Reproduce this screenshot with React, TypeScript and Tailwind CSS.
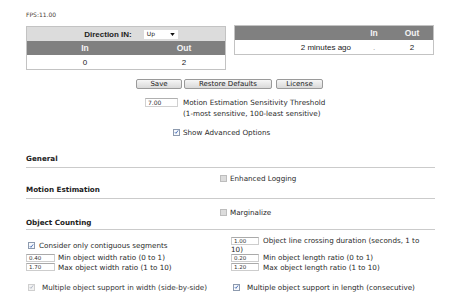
const boxBase = "inline-flex shrink-0 w-[7px] h-[7px] items-center justify-center border";

function Check({ checked, dim }: { checked?: boolean; dim?: boolean }) {
  const tone = dim
    ? "border-[#cfcfcf] bg-[#f2f2f2]"
    : checked
    ? "border-[#8d9aae] bg-[#f7f9fc]"
    : "border-[#bdbdbd] bg-[#dcdcdc]";
  return (
    <span className={`${boxBase} ${tone}`}>
      {checked && (
        <svg viewBox="0 0 8 8" className="w-[6px] h-[6px]">
          <path
            d="M1.4 4.3 L3.1 6.1 L6.7 1.4"
            fill="none"
            stroke={dim ? "#a4adbd" : "#2a58ad"}
            strokeWidth="1.3"
          />
        </svg>
      )}
    </span>
  );
}

function Field({ value, w }: { value: string; w: string }) {
  return (
    <span
      className={`inline-block shrink-0 ${w} h-[8px] border border-[#cdcdcd] border-t-[#aaaaaa] bg-white text-[5.5px] leading-[6px] pl-[2px] text-[#333]`}
    >
      {value}
    </span>
  );
}

function Button({ label, w }: { label: string; w: string }) {
  return (
    <button
      className={`${w} h-[10px] rounded-[2px] border border-[#9a9a9a] bg-gradient-to-b from-[#f6f6f6] to-[#d9d9d9] text-[7px] leading-[8px] text-[#222] font-['DejaVu_Sans',sans-serif]`}
    >
      {label}
    </button>
  );
}

function Section({ title, pb }: { title: string; pb: string }) {
  return (
    <div className={`w-[409px] ${pb} border-b border-[#cbcbcb] text-[7.2px] leading-[9px] font-bold text-[#222]`}>
      {title}
    </div>
  );
}

export default function App() {
  return (
    <div className="w-[464px] h-[307px] overflow-hidden bg-white pl-[26px] text-[7.2px] leading-[9px] text-[#2a2a2a] font-['DejaVu_Sans',sans-serif]">
      {/* FPS */}
      <div className="pt-[11px] h-[19px] text-[6px] leading-[8px] text-[#4a4038]">FPS:11.00</div>

      {/* Counter tables */}
      <div className="mt-[6px] flex items-start gap-[8px] font-['Liberation_Sans',Arial,sans-serif]">
        <div className="mt-[1px] w-[200px] border border-[#c3c3c3]">
          <div className="h-[14px] bg-[#dcdcdc] flex items-center justify-center gap-[12px] pl-[10px]">
            <span className="text-[8px] font-bold text-[#222]">Direction IN:</span>
            <span className="w-[34px] h-[9px] bg-white flex items-center justify-between px-[3px]">
              <span className="text-[6px] leading-[6px] text-[#222] font-['DejaVu_Sans',sans-serif]">Up</span>
              <svg viewBox="0 0 6 4" className="w-[5px] h-[3px]">
                <path d="M0 0 H6 L3 4 Z" fill="#111" />
              </svg>
            </span>
          </div>
          <div className="h-[14px] bg-[#808080] grid grid-cols-[116px_1fr] items-center text-center text-[8.5px] font-bold text-[#f4f4f4]">
            <span>In</span>
            <span>Out</span>
          </div>
          <div className="h-[14px] bg-white grid grid-cols-[116px_1fr] items-center text-center text-[8px] text-[#222]">
            <span>0</span>
            <span>2</span>
          </div>
        </div>

        <div className="w-[200px] border border-[#c3c3c3]">
          <div className="h-[14px] bg-[#808080] grid grid-cols-[122px_34px_1fr] items-center text-center text-[8.5px] font-bold text-[#f4f4f4]">
            <span></span>
            <span>In</span>
            <span>Out</span>
          </div>
          <div className="h-[14px] bg-white grid grid-cols-[122px_34px_1fr] items-center text-center text-[8px] text-[#222]">
            <span className="text-right pr-[6px]">2 minutes ago</span>
            <span className="text-[#999]">.</span>
            <span>2</span>
          </div>
        </div>
      </div>

      {/* Buttons */}
      <div className="mt-[9px] ml-[110px] flex items-center gap-[2px]">
        <Button label="Save" w="w-[46px]" />
        <Button label="Restore Defaults" w="w-[88px]" />
        <div className="ml-[2px] flex">
          <Button label="License" w="w-[47px]" />
        </div>
      </div>

      {/* Sensitivity */}
      <div className="mt-[9px] ml-[119px] flex items-start">
        <span className="w-[33px] h-[9px] border border-[#d0d0d0] border-t-[#b0b0b0] bg-white text-[6px] leading-[7px] pl-[2px] text-[#333]">
          7.00
        </span>
        <div className="ml-[5px] leading-[10.5px]">
          <div>Motion Estimation Sensitivity Threshold</div>
          <div>(1-most sensitive, 100-least sensitive)</div>
        </div>
      </div>

      <div className="mt-[9px] ml-[147px] h-[8px] flex items-center gap-[3px]">
        <Check checked />
        <span>Show Advanced Options</span>
      </div>

      {/* General */}
      <div className="mt-[18px]">
        <Section title="General" pb="pb-[4px]" />
      </div>
      <div className="mt-[6px] ml-[194px] h-[8px] flex items-center gap-[3px]">
        <Check />
        <span>Enhanced Logging</span>
      </div>

      {/* Motion Estimation */}
      <div className="mt-[3px]">
        <Section title="Motion Estimation" pb="pb-[4px]" />
      </div>
      <div className="mt-[9px] ml-[194px] h-[8px] flex items-center gap-[3px]">
        <Check />
        <span>Marginalize</span>
      </div>

      {/* Object Counting */}
      <div className="mt-[2px]">
        <Section title="Object Counting" pb="pb-[2px]" />
      </div>

      <div className="mt-[7px]">
        <div className="flex items-center">
          <div className="w-[205px] flex items-center gap-[4px] pl-[2px]">
            <Check checked />
            <span>Consider only contiguous segments</span>
          </div>
          <div className="w-[204px] leading-[8.5px]">
            <div className="flex items-center gap-[4px]">
              <Field value="1.00" w="w-[28px]" />
              <span>Object line crossing duration (seconds, 1 to</span>
            </div>
            <div>10)</div>
          </div>
        </div>

        <div className="-mt-[1px] h-[9px] flex items-center">
          <div className="w-[205px] flex items-center gap-[3px]">
            <Field value="0.40" w="w-[29px]" />
            <span>Min object width ratio (0 to 1)</span>
          </div>
          <div className="w-[204px] flex items-center gap-[4px]">
            <Field value="0.20" w="w-[28px]" />
            <span>Min object length ratio (0 to 1)</span>
          </div>
        </div>

        <div className="h-[10px] flex items-center">
          <div className="w-[205px] flex items-center gap-[3px]">
            <Field value="1.70" w="w-[29px]" />
            <span>Max object width ratio (1 to 10)</span>
          </div>
          <div className="w-[204px] flex items-center gap-[4px]">
            <Field value="1.20" w="w-[28px]" />
            <span>Max object length ratio (1 to 10)</span>
          </div>
        </div>

        <div className="mt-[10px] h-[10px] flex items-center">
          <div className="w-[205px] flex items-center gap-[7px] pl-[2px] text-[#333]">
            <Check checked dim />
            <span>Multiple object support in width (side-by-side)</span>
          </div>
          <div className="w-[204px] flex items-center gap-[7px] pl-[2px]">
            <Check checked />
            <span>Multiple object support in length (consecutive)</span>
          </div>
        </div>
      </div>
    </div>
  );
}
